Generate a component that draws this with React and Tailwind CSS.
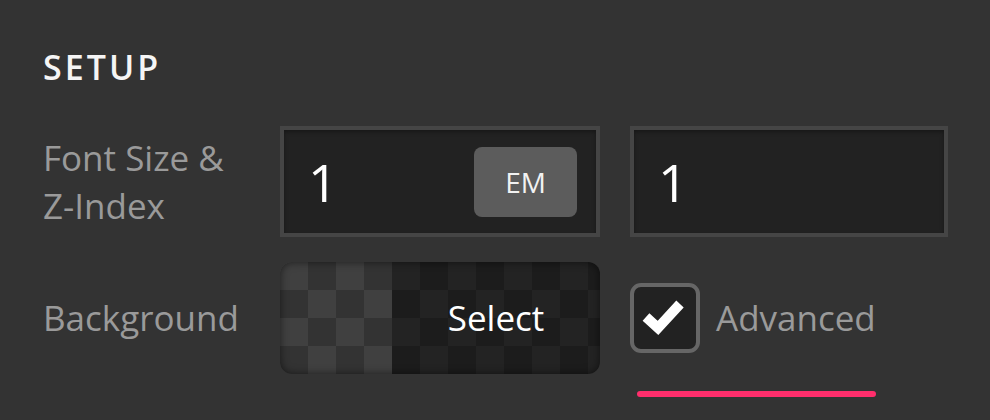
import React from 'react'

const font = { fontFamily: '"Open Sans", "Liberation Sans", sans-serif' }

function Checker() {
  const cells = []
  for (let r = 0; r < 4; r++) {
    for (let c = 0; c < 12; c++) {
      cells.push(
        <div
          key={`${r}-${c}`}
          className={(r + c) % 2 === 0 ? 'bg-[#404040]' : 'bg-[#333333]'}
        />
      )
    }
  }
  return <div className="grid grid-cols-[repeat(12,28px)] grid-rows-[repeat(4,28px)]">{cells}</div>
}

function NumberInput({ width, children }) {
  return (
    <div
      className={`${width} h-[111px] border-4 border-[#454545] bg-[#222222] shadow-[inset_0_2px_4px_rgba(0,0,0,0.35)] flex items-center justify-between pl-[24px] pr-[19px]`}
    >
      <span className="text-[52px] leading-none text-white">1</span>
      {children}
    </div>
  )
}

export default function App() {
  return (
    <div className="w-[990px] h-[420px] bg-[#333333] pl-[43px] pt-[44px] overflow-hidden" style={font}>
      <h2 className="text-[34px] leading-[46px] font-semibold tracking-[0.09em] text-[#f5f5f5]">SETUP</h2>

      {/* Font size & z-index */}
      <div className="flex items-center mt-[36px]">
        <div className="w-[237px] text-[35px] leading-[48px] text-[#9a9a9a]">
          Font Size &amp;
          <br />
          Z-Index
        </div>
        <NumberInput width="w-[320px]">
          <button className="w-[103px] h-[70px] rounded-[8px] bg-[#5c5c5c] text-[28px] text-[#f2f2f2] flex items-center justify-center">
            EM
          </button>
        </NumberInput>
        <div className="ml-[30px]">
          <NumberInput width="w-[318px]" />
        </div>
      </div>

      {/* Background */}
      <div className="flex items-start mt-[25px]">
        <div className="w-[237px] h-[112px] flex items-center text-[35px] leading-[48px] text-[#9a9a9a]">
          Background
        </div>
        <div className="relative w-[320px] h-[112px] rounded-[12px] overflow-hidden">
          <Checker />
          <div className="absolute top-0 bottom-0 right-0 left-[112px] bg-black/45 flex items-center justify-center text-[35px] text-white">
            Select
          </div>
          <div className="absolute inset-0 rounded-[12px] shadow-[inset_0_0_8px_rgba(0,0,0,0.55)]" />
        </div>
        <div className="ml-[30px] flex flex-col">
          <div className="h-[112px] flex items-center">
            <div className="w-[70px] h-[70px] border-4 border-[#666666] rounded-[11px] bg-[#222222]">
              <svg width="62" height="62" viewBox="0 0 62 62">
                <polyline
                  points="12,30 24,41 46,17"
                  fill="none"
                  stroke="#ffffff"
                  strokeWidth="10"
                  strokeLinejoin="miter"
                  strokeLinecap="butt"
                />
              </svg>
            </div>
            <span className="ml-[16px] text-[35px] leading-[48px] text-[#9a9a9a]">Advanced</span>
          </div>
          <div className="mt-[17px] ml-[7px] w-[239px] h-[6px] rounded-full bg-[#ff2e6c]" />
        </div>
      </div>
    </div>
  )
}
